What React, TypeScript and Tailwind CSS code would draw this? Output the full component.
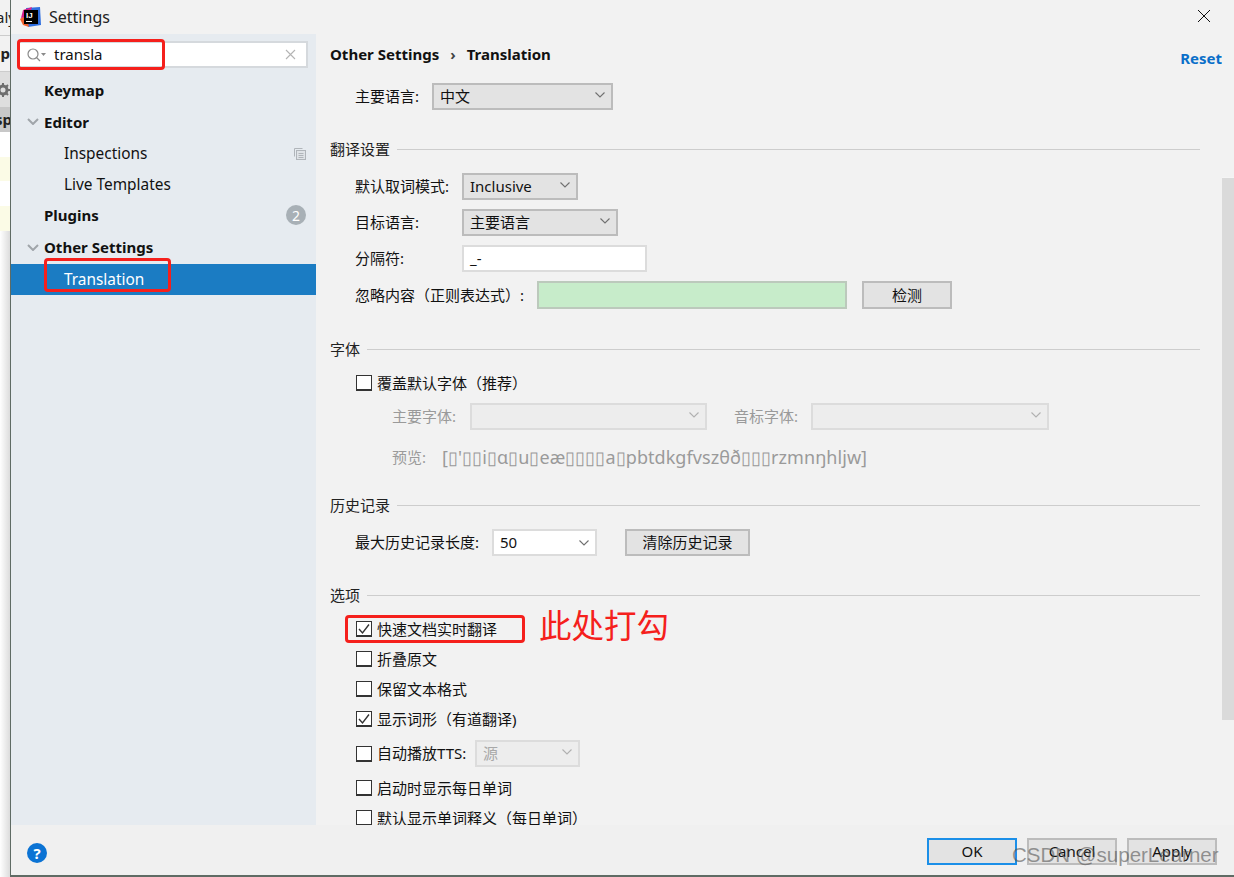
import React from 'react';

const sans = "font-['Noto_Sans','Noto_Sans_CJK_SC',sans-serif]";

function Chevron({ color = '#707070' }: { color?: string }) {
  return (
    <svg width="10" height="6" viewBox="0 0 10 6" fill="none" stroke={color} strokeWidth="1.1">
      <path d="M0.5 0.5 L5 5 L9.5 0.5" />
    </svg>
  );
}

function Combo({ width, value, disabled }: { width: string; value?: string; disabled?: boolean }) {
  return (
    <div
      className={`flex h-[27px] items-center justify-between border-2 pl-[6px] pr-[6px] ${width} ${
        disabled ? 'border-[#dcdcdc] bg-[#ededed] text-[#a8a8a8]' : 'border-[#bcbcbc] bg-[#e3e3e3] text-[#111]'
      }`}
    >
      <span>{value}</span>
      <span className="-mt-[4px] flex">
        <Chevron color={disabled ? '#b0b0b0' : '#707070'} />
      </span>
    </div>
  );
}

function Section({ title, className }: { title: string; className: string }) {
  return (
    <div className={`mr-[22px] flex h-[20px] items-center gap-[7px] ${className}`}>
      <span className="text-[#222]">{title}</span>
      <div className="h-[1px] flex-1 bg-[#cdcdcd]" />
    </div>
  );
}

function Box({ checked }: { checked?: boolean }) {
  return (
    <span className="flex h-[16px] w-[16px] shrink-0 items-center justify-center border border-[#333] border-b-2 bg-white">
      {checked && (
        <svg width="14" height="14" viewBox="0 0 14 14" fill="none" stroke="#333" strokeWidth="1.4">
          <path d="M2 7 L5.5 11 L12 2.5" />
        </svg>
      )}
    </span>
  );
}

function Check({ label, checked, className }: { label: string; checked?: boolean; className: string }) {
  return (
    <div className={`flex h-[20px] items-center gap-[5px] pl-[26px] text-[#111] ${className}`}>
      <Box checked={checked} />
      <span>{label}</span>
    </div>
  );
}

function NavRow({ label, bold, caret, indent, height, active, children }: { label: string; bold?: boolean; caret?: boolean; indent: string; height: string; active?: boolean; children?: React.ReactNode }) {
  return (
    <div className={`relative flex items-center pr-[10px] ${height} ${indent} ${active ? 'bg-[#1b7cc3] text-white' : 'text-[#111]'} ${bold ? 'text-[15px] font-bold' : 'text-[15.4px]'}`}>
      {caret && (
        <svg className="absolute left-[16px] top-[12px]" width="12" height="7" viewBox="0 0 12 7" fill="none" stroke="#a0a5aa" strokeWidth="2">
          <path d="M1 1 L6 6 L11 1" />
        </svg>
      )}
      <span className="flex-1">{label}</span>
      {children}
    </div>
  );
}

function Logo() {
  return (
    <svg width="21" height="20" viewBox="0 0 21 20">
      <path d="M6 1 L20 0 L21 18 L8 20 Z" fill="#2f6fe0" />
      <path d="M0 12 L6 8 L9 20 L3 18 Z" fill="#f2622e" />
      <path d="M3 3 L12 0 L9 9 L1 11 Z" fill="#d81f8c" />
      <rect x="4" y="3" width="14" height="14" fill="#000" />
      <text x="6" y="11" fontSize="8" fontWeight="700" fill="#fff" fontFamily="Liberation Sans">IJ</text>
      <rect x="6" y="14" width="6" height="1" fill="#fff" />
    </svg>
  );
}

export default function App() {
  return (
    <div className={`relative flex h-[877px] w-[1234px] overflow-hidden bg-white text-[15px] ${sans}`}>
      {/* IDE behind the dialog */}
      <div className="flex w-[10px] shrink-0 flex-col overflow-hidden bg-white text-[15px] leading-none text-[#222]">
        <div className="flex h-[36px] items-center whitespace-nowrap border-b border-[#ccc] bg-[#f2f2f2]">
          <span className="-ml-[4px]">aly</span>
        </div>
        <div className="flex h-[36px] items-center justify-end border-b border-[#ccc] bg-[#f2f2f2] font-bold">p</div>
        <div className="flex h-[35px] items-center justify-end bg-[#dedede]">
          <svg className="shrink-0" width="14" height="14" viewBox="0 0 14 14" fill="none" stroke="#6e6e6e" strokeWidth="3">
            <circle cx="7" cy="7" r="4" />
            <path d="M7 0 V3 M7 11 V14 M0 7 H3 M11 7 H14 M2 2 L4 4 M10 10 L12 12 M12 2 L10 4 M4 10 L2 12" strokeWidth="2" />
          </svg>
        </div>
        <div className="flex h-[25px] items-center whitespace-nowrap bg-[#c8c8c8] font-bold">
          <span className="-ml-[5px]">sp</span>
        </div>
        <div className="mt-[25px] h-[24px] bg-[#fbfbe6]" />
        <div className="mt-[25px] h-[25px] bg-[#fbfbe6]" />
        <div className="flex-1 bg-gradient-to-r from-white to-[#dcdcdc]" />
      </div>

      {/* Dialog */}
      <div className="flex min-w-0 flex-1 flex-col border-b-2 border-l border-[#5f6b64] bg-[#f2f2f2]">
        <div className="flex h-[34px] shrink-0 items-center pl-[9px] pr-[23px]">
          <Logo />
          <span className="ml-[8px] flex-1 text-[16px] text-[#222]">Settings</span>
          <svg className="-mt-[2px]" width="14" height="14" viewBox="0 0 14 14" stroke="#111" strokeWidth="1">
            <path d="M1 1 L13 13 M13 1 L1 13" />
          </svg>
        </div>

        <div className="flex min-h-0 flex-1">
          {/* Sidebar */}
          <aside className="flex w-[305px] shrink-0 flex-col bg-[#e6ebf0]">
            <div className="ml-[6px] mr-[8px] mt-[7px] flex h-[27px] items-center border-2 border-[#d5d9dd] bg-white pl-[7px] pr-[10px] text-[15px] text-[#111]">
              <svg width="20" height="16" viewBox="0 0 20 16" fill="none" stroke="#8a8a8a" strokeWidth="1.2">
                <circle cx="7" cy="7" r="5" />
                <path d="M10.5 10.5 L14 14" />
                <path d="M15 6 L20 6 L17.5 9 Z" fill="#8a8a8a" stroke="none" />
              </svg>
              <span className="ml-[8px] flex-1">transla</span>
              <svg width="11" height="11" viewBox="0 0 11 11" stroke="#b4b4b4" strokeWidth="1.1">
                <path d="M1 1 L10 10 M10 1 L1 10" />
              </svg>
            </div>
            <div className="mt-[7px]">
              <NavRow label="Keymap" bold indent="pl-[33px]" height="h-[31px]" />
              <NavRow label="Editor" bold caret indent="pl-[33px]" height="h-[32px]" />
              <NavRow label="Inspections" indent="pl-[53px]" height="h-[31px]">
                <svg width="12" height="12" viewBox="0 0 12 12" fill="none" stroke="#b0b5ba" strokeWidth="1">
                  <path d="M0.5 8.5 V0.5 H8.5" />
                  <rect x="2.5" y="2.5" width="9" height="9" fill="#dfe3e7" />
                  <path d="M4.5 5.5 H9.5 M4.5 7.5 H9.5 M4.5 9.5 H9.5" />
                </svg>
              </NavRow>
              <NavRow label="Live Templates" indent="pl-[53px]" height="h-[31px]" />
              <NavRow label="Plugins" bold indent="pb-[2px] pl-[33px]" height="h-[32px]">
                <span className="flex h-[20px] w-[20px] items-center justify-center rounded-full bg-[#a8b0b6] text-[14px] font-normal text-white">2</span>
              </NavRow>
              <NavRow label="Other Settings" bold caret indent="pb-[2px] pl-[33px]" height="h-[32px]" />
              <NavRow label="Translation" active indent="pl-[53px]" height="h-[31px]" />
            </div>
          </aside>

          {/* Content */}
          <main className="flex min-w-0 flex-1 overflow-hidden pl-[14px]">
            <div className="min-w-0 flex-1 overflow-hidden">
              <div className="flex h-[40px] items-center justify-between text-[15px] font-bold text-[#111]">
                <div className="flex items-center">
                  <span>Other Settings</span>
                  <span className="mx-[11px] text-[#444]">›</span>
                  <span>Translation</span>
                </div>
                <span className="mt-[8px] text-[#0a6fc9]">Reset</span>
              </div>

              <div className="mt-[9px] flex h-[27px] items-center pl-[25px] text-[#111]">
                <span className="w-[77px]">主要语言:</span>
                <Combo width="w-[181px]" value="中文" />
              </div>

              <Section title="翻译设置" className="mt-[29px]" />
              <div className="mt-[14px] flex h-[27px] items-center pl-[25px] text-[#111]">
                <span className="w-[107px]">默认取词模式:</span>
                <Combo width="w-[116px]" value="Inclusive" />
              </div>
              <div className="mt-[9px] flex h-[27px] items-center pl-[25px] text-[#111]">
                <span className="w-[107px]">目标语言:</span>
                <Combo width="w-[156px]" value="主要语言" />
              </div>
              <div className="mt-[9px] flex h-[27px] items-center pl-[25px] text-[#111]">
                <span className="w-[107px]">分隔符:</span>
                <div className="flex h-[27px] w-[185px] items-center border-2 border-[#dcdcdc] bg-white pl-[6px]">_-</div>
              </div>
              <div className="mt-[9px] flex h-[28px] items-center pl-[25px] text-[#111]">
                <span className="w-[182px] whitespace-nowrap">忽略内容（正则表达式）:</span>
                <div className="h-[28px] w-[310px] border-2 border-[#bcc9bc] bg-[#c7ecca]" />
                <div className="ml-[15px] flex h-[28px] w-[90px] items-center justify-center border-2 border-[#bcbcbc] bg-[#e3e3e3]">检测</div>
              </div>

              <Section title="字体" className="mt-[30px]" />
              <Check label="覆盖默认字体（推荐）" className="mt-[14px]" />
              <div className="mt-[10px] flex h-[27px] items-center pl-[62px] text-[#9a9a9a]">
                <span className="w-[78px]">主要字体:</span>
                <Combo width="w-[237px]" disabled />
                <span className="ml-[27px] w-[77px]">音标字体:</span>
                <Combo width="w-[238px]" disabled />
              </div>
              <div className="mt-[17px] flex h-[20px] items-center pl-[62px] text-[18px] text-[#9a9a9a]">
                <span className="w-[50px] text-[15px]">预览:</span>
                <span className="whitespace-nowrap tracking-[0.06px]">[▯'▯▯i▯ɑ▯u▯eæ▯▯▯▯a▯pbtdkgfvszθð▯▯▯rzmnŋhljw]</span>
              </div>

              <Section title="历史记录" className="mt-[28px]" />
              <div className="mt-[14px] flex h-[27px] items-center pl-[25px] text-[#111]">
                <span className="w-[137px]">最大历史记录长度:</span>
                <div className="flex h-[27px] w-[105px] items-center justify-between border-2 border-[#dcdcdc] bg-white pl-[6px] pr-[6px]">
                  <span>50</span>
                  <Chevron />
                </div>
                <div className="ml-[28px] flex h-[27px] w-[125px] items-center justify-center border-2 border-[#bcbcbc] bg-[#e3e3e3]">清除历史记录</div>
              </div>

              <Section title="选项" className="mt-[29px]" />
              <Check label="快速文档实时翻译" checked className="mt-[14px]" />
              <Check label="折叠原文" className="mt-[10px]" />
              <Check label="保留文本格式" className="mt-[10px]" />
              <Check label="显示词形（有道翻译)" checked className="mt-[10px]" />
              <div className="mt-[10px] flex h-[29px] items-center gap-[5px] pl-[26px] text-[#111]">
                <Box />
                <span className="w-[93px] whitespace-nowrap">自动播放TTS:</span>
                <Combo width="w-[105px]" value="源" disabled />
              </div>
              <Check label="启动时显示每日单词" className="mt-[10px]" />
              <Check label="默认显示单词释义（每日单词）" className="mt-[10px]" />
            </div>

            {/* Scrollbar */}
            <div className="w-[12px] shrink-0 pt-[143px]">
              <div className="h-[543px] border-t border-[#f5f5f5] bg-[#dadada]" />
            </div>
          </main>
        </div>

        {/* Footer */}
        <div className="flex h-[50px] shrink-0 justify-between bg-[#f0f0f0] pl-[16px] pr-[17px]">
          <span className="mt-[18px] flex h-[20px] w-[20px] items-center justify-center rounded-full bg-[#0b73d4] text-[15px] font-bold text-white">?</span>
          <div className="mt-[13px] flex h-[27px] gap-[10px] text-[15px] text-[#111]">
            <div className="flex w-[90px] items-center justify-center border-2 border-[#1b8fe8] bg-[#e3e3e3]">OK</div>
            <div className="flex w-[90px] items-center justify-center border-2 border-[#bcbcbc] bg-[#e3e3e3]">Cancel</div>
            <div className="flex w-[90px] items-center justify-center border-2 border-[#bcbcbc] bg-[#e3e3e3]">Apply</div>
          </div>
        </div>
      </div>

      {/* Annotations drawn on the screenshot */}
      <div className="absolute left-[17px] top-[39px] h-[31px] w-[148px] rounded-[4px] border-[3px] border-[#f5201c]" />
      <div className="absolute left-[44px] top-[258px] h-[34px] w-[127px] rounded-[4px] border-[3px] border-[#f5201c]" />
      <div className="absolute left-[345px] top-[615px] h-[28px] w-[180px] rounded-[4px] border-[3px] border-[#f5201c]" />
      <span className="absolute left-[539px] top-[603px] text-[32.5px] leading-[46px] text-[#f5201c]">此处打勾</span>
      <span className="absolute left-[1012px] top-[842px] font-['Liberation_Sans',sans-serif] text-[20.5px] leading-[26px] text-[#55555599]">CSDN @superLearner</span>
    </div>
  );
}
